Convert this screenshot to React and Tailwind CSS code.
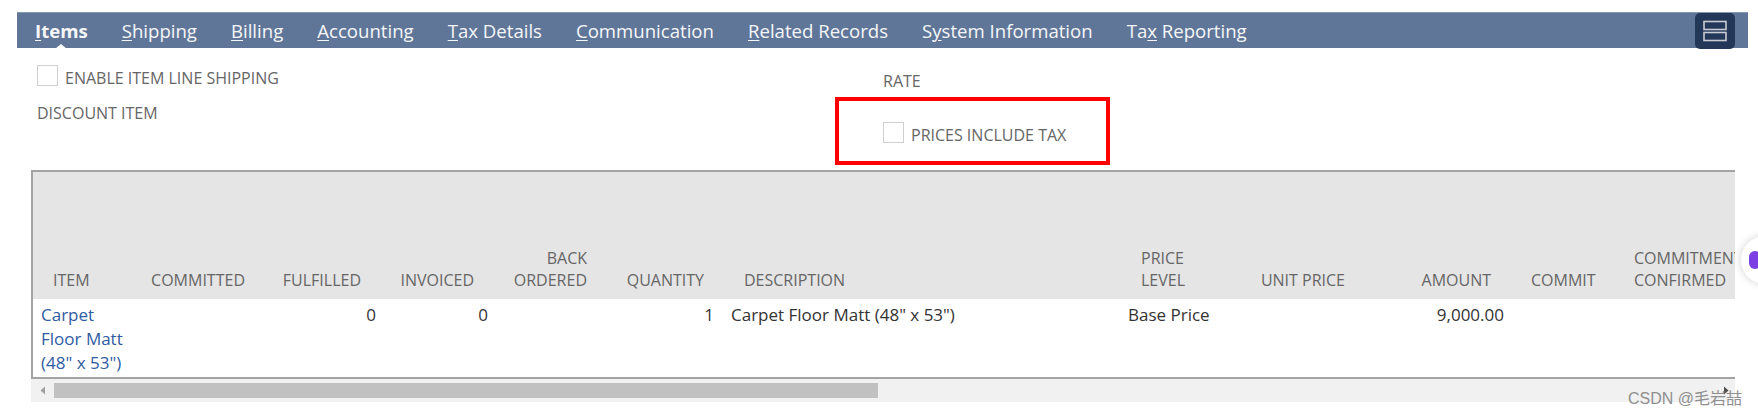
import React from "react";

const tabs = [
  { pre: "", key: "I", post: "tems", active: true },
  { pre: "", key: "S", post: "hipping" },
  { pre: "", key: "B", post: "illing" },
  { pre: "", key: "A", post: "ccounting" },
  { pre: "", key: "T", post: "ax Details" },
  { pre: "", key: "C", post: "ommunication" },
  { pre: "", key: "R", post: "elated Records" },
  { pre: "S", key: "y", post: "stem Information" },
  { pre: "Ta", key: "x", post: " Reporting" },
];

const cols =
  "grid grid-cols-[108px_124px_116px_113px_113px_113px_400px_125px_120px_146px_104px_170px]";

function Checkbox() {
  return <div className="w-[21px] h-[21px] border border-[#cfcfcf] bg-white shrink-0" />;
}

function TabBar() {
  return (
    <div className="h-[36px] bg-[#607698] border-t border-[#8597b3] flex items-center pl-[18px] pr-[13px]">
      <div className="flex items-center gap-[34px] flex-1">
        {tabs.map((t, i) => (
          <div
            key={i}
            className={
              "relative text-[18.6px] leading-[36px] text-[#f5f6f8] " +
              (t.active ? "font-bold" : "")
            }
          >
            {t.pre}
            <span className="underline underline-offset-2 decoration-1">{t.key}</span>
            {t.post}
            {t.active && (
              <div className="absolute bottom-0 left-1/2 -translate-x-1/2 w-0 h-0 border-l-[6px] border-r-[6px] border-b-[5px] border-l-transparent border-r-transparent border-b-white" />
            )}
          </div>
        ))}
      </div>
      <div className="w-[40px] h-[36px] bg-[#233759] rounded-[5px] flex items-center justify-center">
        <svg width="24" height="22" viewBox="0 0 24 22">
          <rect x="1" y="1.5" width="22" height="8" fill="none" stroke="#c9ccd2" strokeWidth="1.6" />
          <rect x="1" y="12.5" width="22" height="8" fill="none" stroke="#c9ccd2" strokeWidth="1.6" />
        </svg>
      </div>
    </div>
  );
}

function HeaderCell({ lines, align = "left", pad }) {
  return (
    <div
      className={
        "flex flex-col justify-end pb-[8px] text-[16px] leading-[22px] text-[#666] whitespace-nowrap " +
        (align === "right" ? "items-end " : "items-start ") +
        pad
      }
    >
      {lines.map((l, i) => (
        <div key={i}>{l}</div>
      ))}
    </div>
  );
}

export default function App() {
  return (
    <div className="relative w-[1758px] h-[415px] bg-white overflow-hidden font-['Open_Sans',sans-serif]">
      <div className="pt-[12px] pl-[17px] pr-[10px]">
        <TabBar />
      </div>

      {/* form fields */}
      <div className="flex pl-[37px] pt-[16px] h-[122px]">
        <div className="w-[846px] flex flex-col">
          <div className="flex items-end gap-[7px] h-[22px]">
            <Checkbox />
            <span className="text-[16px] leading-[16px] text-[#666] uppercase">Enable Item Line Shipping</span>
          </div>
          <div className="mt-[19px] text-[16px] leading-[16px] text-[#666] uppercase">Discount Item</div>
        </div>
        <div className="flex flex-col">
          <div className="pt-[9px] text-[16px] leading-[16px] text-[#666]">RATE</div>
          <div className="mt-[8px] -ml-[48px] w-[275px] h-[68px] border-[4px] border-[#ff0000] pl-[44px] pt-[21px]">
            <div className="flex items-end gap-[7px]">
              <Checkbox />
              <span className="text-[16px] leading-[16px] text-[#666] uppercase">Prices Include Tax</span>
            </div>
          </div>
        </div>
      </div>

      {/* sublist table */}
      <div className="ml-[31px] w-[1704px]">
        <div className="border-l-2 border-t-2 border-b-2 border-[#a3a3a3] overflow-hidden">
          <div className={cols + " h-[127px] bg-[#e5e5e5]"}>
            <HeaderCell lines={["ITEM"]} pad="pl-[20px]" />
            <HeaderCell lines={["COMMITTED"]} align="right" pad="pr-[20px]" />
            <HeaderCell lines={["FULFILLED"]} align="right" pad="pr-[20px]" />
            <HeaderCell lines={["INVOICED"]} align="right" pad="pr-[20px]" />
            <HeaderCell lines={["BACK", "ORDERED"]} align="right" pad="pr-[20px]" />
            <HeaderCell lines={["QUANTITY"]} align="right" pad="pr-[16px]" />
            <HeaderCell lines={["DESCRIPTION"]} pad="pl-[24px]" />
            <HeaderCell lines={["PRICE", "LEVEL"]} pad="pl-[21px]" />
            <HeaderCell lines={["UNIT PRICE"]} align="right" pad="pr-[20px]" />
            <HeaderCell lines={["AMOUNT"]} align="right" pad="pr-[20px]" />
            <HeaderCell lines={["COMMIT"]} pad="pl-[20px]" />
            <HeaderCell lines={["COMMITMENT", "CONFIRMED"]} pad="pl-[19px]" />
          </div>
          <div className={cols + " h-[78px] bg-white text-[17px] leading-[24px] text-[#333] pt-[4px]"}>
            <div className="pl-[8px] text-[#2f5ba3]">
              Carpet
              <br />
              Floor Matt
              <br />
              (48" x 53")
            </div>
            <div />
            <div className="text-right pr-[5px]">0</div>
            <div className="text-right pr-[6px]">0</div>
            <div />
            <div className="text-right pr-[6px]">1</div>
            <div className="pl-[11px]">Carpet Floor Matt (48" x 53")</div>
            <div className="pl-[8px]">Base Price</div>
            <div />
            <div className="text-right pr-[7px]">9,000.00</div>
            <div />
            <div />
          </div>
        </div>
        {/* horizontal scrollbar */}
        <div className="h-[23px] bg-[#f1f1f1] flex items-center pl-[9px] pr-[6px]">
          <svg width="6" height="9" viewBox="0 0 6 9">
            <path d="M5 0.5 L0.5 4.5 L5 8.5 Z" fill="#a0a0a0" />
          </svg>
          <div className="ml-[8px] w-[824px] h-[15px] bg-[#c1c1c1]" />
          <div className="flex-1" />
          <svg width="6" height="9" viewBox="0 0 6 9">
            <path d="M1 0.5 L5.5 4.5 L1 8.5 Z" fill="#505050" />
          </svg>
        </div>
      </div>

      {/* floating widget, partly off screen */}
      <div className="absolute left-[1741px] top-[236px] w-[48px] h-[48px] rounded-full bg-white shadow-[0_0_8px_rgba(0,0,0,0.18)] flex items-center pl-[8px]">
        <div className="w-[12px] h-[18px] rounded-full bg-[#7b3fe4]" />
      </div>

      {/* watermark */}
      <div className="absolute left-[1628px] top-[388px] text-[16px] leading-[22px] text-[#8f8f8f] font-['Liberation_Sans','Noto_Sans_CJK_SC',sans-serif]">
        CSDN @毛岩喆
      </div>
    </div>
  );
}
